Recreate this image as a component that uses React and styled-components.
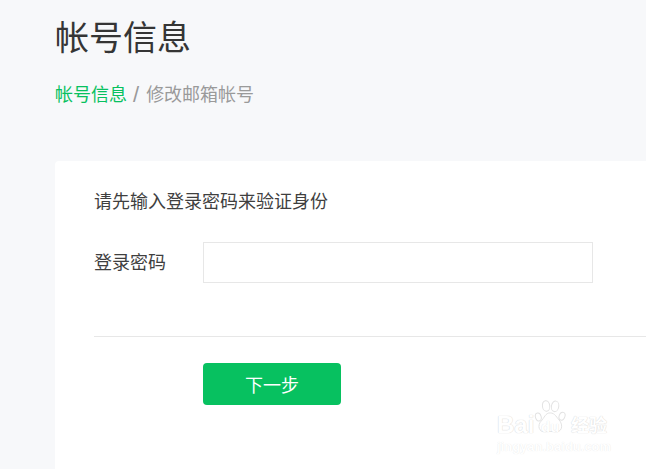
import React from 'react';
import styled, { createGlobalStyle } from 'styled-components';

const Global = createGlobalStyle`
  html, body { margin: 0; padding: 0; background: #f7f8fa; }
  body { font-family: "Liberation Sans", "Noto Sans CJK SC", sans-serif; color: #353535; }
`;

const Page = styled.div`
  position: relative;
  width: 646px;
  height: 469px;
  overflow: hidden;
  box-sizing: border-box;
  padding: 14px 0 0 55px;
`;

const Title = styled.h1`
  margin: 0;
  font-size: 34px;
  line-height: 48px;
  font-weight: 400;
  color: #353535;
`;

const Crumbs = styled.div`
  margin-top: 19px;
  display: flex;
  font-size: 18px;
  line-height: 28px;
  color: #9a9a9a;
`;

const CrumbLink = styled.a`
  color: #07c160;
`;

const Sep = styled.span`
  margin: 0 7px 0 6px;
  font-size: 22px;
  line-height: 28px;
`;

const Card = styled.section`
  margin-top: 52px;
  width: 640px;
  height: 360px;
  box-sizing: border-box;
  padding: 27px 0 0 39px;
  background: #fff;
  border-radius: 4px;
`;

const Hint = styled.p`
  margin: 0;
  font-size: 18px;
  line-height: 28px;
  color: #3f3f3f;
`;

const Row = styled.div`
  margin-top: 26px;
  display: flex;
  align-items: center;
`;

const Label = styled.label`
  width: 109px;
  font-size: 18px;
  line-height: 28px;
  color: #3f3f3f;
`;

const Input = styled.input`
  width: 390px;
  height: 41px;
  box-sizing: border-box;
  padding: 0 12px;
  border: 1px solid #e7e7e7;
  background: #fff;
  outline: none;
`;

const Divider = styled.hr`
  margin: 53px 0 0;
  border: 0;
  border-top: 1px solid #e7e7e7;
`;

const Button = styled.button`
  display: block;
  margin: 26px 0 0 109px;
  width: 138px;
  height: 42px;
  padding: 0;
  border: 0;
  border-radius: 4px;
  background: #07c160;
  color: #fff;
  font: inherit;
  font-size: 18px;
`;

const Watermark = styled.div`
  position: absolute;
  left: 496px;
  top: 399px;
  width: 150px;
  height: 60px;
  color: #fff;
  pointer-events: none;
`;

const MarkTop = styled.div`
  position: relative;
  height: 41px;
`;

const Bai = styled.span`
  position: absolute;
  left: 1px;
  top: 14px;
  font-size: 24px;
  line-height: 24px;
  font-weight: 700;
  color: #fff;
  text-shadow: 0 0 1px #dadada, 0 0 1px #dadada;
`;

const Du = styled.span`
  position: absolute;
  left: 45px;
  top: 20px;
  font-size: 15px;
  line-height: 16px;
  font-weight: 700;
  color: #fff;
  text-shadow: 0 0 1px #dadada;
`;

const Jing = styled.span`
  position: absolute;
  left: 75px;
  top: 15px;
  font-size: 18px;
  line-height: 24px;
  font-weight: 700;
  color: #fff;
  text-shadow: 0 0 1px #dadada, 0 0 1px #dadada;
`;

const Site = styled.div`
  margin-left: 1px;
  font-size: 13px;
  line-height: 14px;
  font-weight: 700;
  color: #fff;
  text-shadow: 0 0 1px #e2e2e2;
`;

const Paw = styled.svg`
  position: absolute;
  left: 38px;
  top: 0;
`;

function PawMark() {
  return (
    <Paw width="34" height="36" viewBox="0 0 40 44" fill="#fff" stroke="#e2e2e2" strokeWidth="1.2">
      <ellipse cx="4.500" cy="22" rx="3.500" ry="5" transform="rotate(-15 4.500 22)" />
      <ellipse cx="14" cy="8.500" rx="4.500" ry="6.500" transform="rotate(-8 14 8.500)" />
      <ellipse cx="25" cy="9" rx="4.500" ry="6.500" transform="rotate(10 25 9)" />
      <ellipse cx="33.500" cy="21" rx="3.500" ry="5" transform="rotate(20 33.500 21)" />
      <path d="M19 17 C13 17 12 23 8 27 C3 32 5 41 13 40 C17 39.500 21 39.500 25 40 C33 41 35 33 31 27 C27 23 25 17 19 17 Z" />
    </Paw>
  );
}

export default function App() {
  return (
    <>
      <Global />
      <Page>
        <Title>帐号信息</Title>
        <Crumbs>
          <CrumbLink>帐号信息</CrumbLink>
          <Sep>/</Sep>
          <span>修改邮箱帐号</span>
        </Crumbs>
        <Card>
          <Hint>请先输入登录密码来验证身份</Hint>
          <Row>
            <Label>登录密码</Label>
            <Input type="password" />
          </Row>
          <Divider />
          <Button>下一步</Button>
        </Card>
        <Watermark>
          <MarkTop>
            <Bai>Bai</Bai>
            <PawMark />
            <Du>du</Du>
            <Jing>经验</Jing>
          </MarkTop>
          <Site>jingyan.baidu.com</Site>
        </Watermark>
      </Page>
    </>
  );
}
